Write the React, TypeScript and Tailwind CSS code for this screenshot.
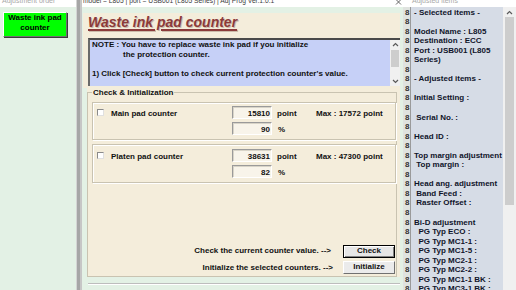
const adjusted = [
  "- Selected items -",
  "",
  "Model Name : L805",
  "Destination : ECC",
  "Port : USB001 (L805",
  "Series)",
  "",
  "- Adjusted items -",
  "",
  "Initial Setting :",
  "",
  " Serial No. :",
  "",
  "Head ID :",
  "",
  "Top margin adjustment",
  " Top margin :",
  "",
  "Head ang. adjustment",
  " Band Feed :",
  " Raster Offset :",
  "",
  "Bi-D adjustment",
  "  PG Typ ECO :",
  "  PG Typ MC1-1 :",
  "  PG Typ MC1-5 :",
  "  PG Typ MC2-1 :",
  "  PG Typ MC2-2 :",
  "  PG Typ MC1-1 BK :",
  "  PG Typ MC3-1 BK :",
];

function Chevron({ down }: { down?: boolean }) {
  return (
    <svg width="7" height="5" viewBox="0 0 7 5">
      <path d={down ? "M1 1 L3.5 3.5 L6 1" : "M1 4 L3.5 1.5 L6 4"} stroke="#5a5a5a" strokeWidth="1.2" fill="none" />
    </svg>
  );
}

function Field({ value }: { value: string }) {
  return (
    <div className="w-[40px] h-[13px] bg-[#f8f4ea] border border-t-[#9a9a9a] border-l-[#9a9a9a] border-b-white border-r-white shadow-[inset_1px_1px_0_#d8d4c8] text-right pr-[1px] pt-[2px] leading-[9.6px]">
      {value}
    </div>
  );
}

function CounterBox({ label, points, pct, max, top }: { label: string; points: string; pct: string; max: string; top: string }) {
  return (
    <div className={`ml-[4px] mt-[4px] w-[304px] border border-[#c9c3b1] shadow-[inset_1px_1px_0_#fff,1px_1px_0_#fff] pl-[4px] flex flex-col gap-[3px] ${top}`}>
      <div className="flex h-[13px] items-center">
        <span className="w-[7px] h-[7px] bg-white border border-t-[#8a8a8a] border-l-[#8a8a8a] border-b-[#e0e0e0] border-r-[#e0e0e0]" />
        <span className="ml-[7px] w-[121px] self-start pt-[3px]">{label}</span>
        <Field value={points} />
        <span className="ml-[5px] w-[39px] self-start pt-[3px]">point</span>
        <span className="self-start pt-[3px]">Max : {max} point</span>
      </div>
      <div className="flex h-[13px]">
        <div className="ml-[135px]">
          <Field value={pct} />
        </div>
        <span className="ml-[6px] pt-[3px]">%</span>
      </div>
    </div>
  );
}

export default function App() {
  return (
    <div className="w-[516px] h-[290px] overflow-hidden flex bg-[#e3f1e5] font-['Liberation_Sans',Arial,sans-serif] text-[8px] font-bold leading-[9.6px] text-[#111]">
      {/* Adjustment order */}
      <div className="w-[76px] flex flex-col">
        <div className="h-[7px] bg-white overflow-hidden">
          <div className="-mt-[3px] pl-[2px] text-[7px] leading-[7px] font-normal text-[#a8a8a8] whitespace-nowrap">Adjustment order</div>
        </div>
        <button className="mt-[5px] ml-[3px] w-[64px] h-[25px] bg-[#00ff00] border border-t-white border-l-white border-r-[#707070] border-b-[#707070] shadow-[1px_1px_0_#3a3a3a] text-[8px] leading-[10px] font-bold text-black flex flex-col items-center">
          <span>Waste ink pad</span>
          <span>counter</span>
        </button>
      </div>

      {/* splitter */}
      <div className="w-[6px] bg-[#a6a6a6] border-l border-l-[#d4d4d4] border-r-2 border-r-[#c6c6c6]" />

      {/* Main window */}
      <div className="w-[321px] flex flex-col">
        <div className="h-[7px] bg-white overflow-hidden flex justify-between">
          <div className="-mt-[3px] pl-[1px] text-[6.7px] leading-[7px] font-normal text-[#3a3a3a] whitespace-nowrap">
            model = L805 | port = USB001 (L805 Series) | Adj Prog Ver.1.0.1
          </div>
          <svg className="mr-[1px] -mt-[1px]" width="7" height="7" viewBox="0 0 7 7">
            <path d="M1 0.5 L6 5.5 M6 0.5 L1 5.5" stroke="#555" strokeWidth="0.9" />
          </svg>
        </div>

        <div className="mt-[6px] ml-[1px] w-[317px] h-[75px] bg-[#f4eddb] pt-[1px]">
          <div className="pl-[5px] text-[14px] leading-[16px] italic font-bold text-[#8b3a3a] underline decoration-2 underline-offset-[2px] [text-shadow:1px_1px_0_#cbbcab]">
            Waste ink pad counter
          </div>
          <div className="mt-[8px] ml-[5px] w-[312px] h-[48px] bg-[#c6d0f7] border-t-2 border-l-2 border-t-[#4a4a4a] border-l-[#6a6a6a] flex">
            <div className="flex-1 pl-[2px] leading-[9.7px] whitespace-nowrap">
              <div>NOTE : You have to replace waste ink pad if you initialize</div>
              <div className="ml-[31px]">the protection counter.</div>
              <div className="h-[9.7px]" />
              <div>1) Click [Check] button to check current protection counter's value.</div>
            </div>
            <div className="w-[10px] bg-[#f0f0f0] flex flex-col items-center">
              <div className="h-[9px] flex items-center">
                <Chevron />
              </div>
              <div className="mt-[1px] w-[8px] h-[17px] bg-[#cdcdcd]" />
              <div className="flex-1" />
              <div className="h-[9px] flex items-center">
                <Chevron down />
              </div>
            </div>
          </div>
        </div>

        <div className="ml-[5px] w-[313px] h-[189px] bg-[#f4eddb]">
          <fieldset className="w-[310px] h-[189px] border border-[#c9c3b1]">
            <legend className="ml-[4px] px-[1px] leading-[9.6px]">Check &amp; Initialization</legend>
            <CounterBox label="Main pad counter" points="15810" pct="90" max="17572" top="h-[38px] pt-[3px]" />
            <CounterBox label="Platen pad counter" points="38631" pct="82" max="47300" top="h-[39px] pt-[4px]" />

            <div className="mt-[62px] mr-[1px] flex flex-col items-end gap-[3px]">
              <div className="flex items-start">
                <span className="pt-[1px] mr-[12px]">Check the current counter value. --&gt;</span>
                <button className="w-[52px] h-[13px] bg-[#e6e6e6] border border-black shadow-[inset_1px_1px_0_#fff,inset_-1px_-1px_0_#808080] text-[8px] font-bold leading-[10px] text-[#111]">
                  Check
                </button>
              </div>
              <div className="flex items-start">
                <span className="pt-[2px] mr-[10px]">Initialize the selected counters. --&gt;</span>
                <button className="w-[52px] h-[13px] bg-[#ebebeb] border border-t-white border-l-white border-r-[#707070] border-b-[#707070] text-[8px] font-bold leading-[10px] text-[#111]">
                  Initialize
                </button>
              </div>
            </div>
          </fieldset>
        </div>
        <div className="mt-[6px] ml-[6px] w-[312px] h-[2px] border-t border-t-[#bdbdbd] border-b border-b-white" />
      </div>

      {/* Adjusted items */}
      <div className="flex-1 flex flex-col">
        <div className="h-[7px] bg-white overflow-hidden">
          <div className="-mt-[3px] pl-[9px] text-[7px] leading-[7px] font-normal text-[#a8a8a8] whitespace-nowrap">Adjusted items</div>
        </div>
        <div className="flex-1 flex min-h-0">
          <div className="w-[7px] bg-[#dfe3df] overflow-hidden pt-[0.5px] pl-[2px] leading-[9.55px] text-[#333]">
            {adjusted.map((_, i) => (
              <div key={i} className="h-[9.55px]">8</div>
            ))}
          </div>
          <div className="w-[1px] bg-[#9a9a9a]" />
          <div className="flex-1 bg-[#d6dce6] pl-[3px] pt-[0.5px] overflow-hidden whitespace-pre leading-[9.55px] text-[#10142a]">
            {adjusted.map((t, i) => (
              <div key={i} className="h-[9.55px]">{t}</div>
            ))}
          </div>
          <div className="w-[13px] bg-[#f0f0f0] flex flex-col items-center">
            <div className="h-[10px] flex items-center">
              <Chevron />
            </div>
            <div className="w-[9px] h-[188px] bg-[#cdcdcd]" />
          </div>
        </div>
      </div>
    </div>
  );
}
